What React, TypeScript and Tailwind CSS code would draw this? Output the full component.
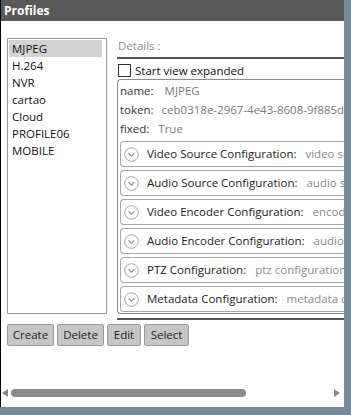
import React from 'react';

const profiles = ['MJPEG', 'H.264', 'NVR', 'cartao', 'Cloud', 'PROFILE06', 'MOBILE'];

const sections: [string, string][] = [
  ['Video Source Configuration:', 'video source configuration'],
  ['Audio Source Configuration:', 'audio source configuration'],
  ['Video Encoder Configuration:', 'encoder configuration'],
  ['Audio Encoder Configuration:', 'audio encoder configuration'],
  ['PTZ Configuration:', 'ptz configuration'],
  ['Metadata Configuration:', 'metadata configuration'],
];

const buttons: [string, string][] = [
  ['Create', 'w-[47px]'],
  ['Delete', 'w-[47px]'],
  ['Edit', 'w-[34px]'],
  ['Select', 'w-[45px]'],
];

function ExpandIcon() {
  return (
    <svg width="15" height="15" viewBox="0 0 15 15" className="shrink-0">
      <circle cx="7.5" cy="7.5" r="6.8" fill="white" stroke="#a3a3a3" strokeWidth="1" />
      <path d="M4.6 6.2 L7.5 9.1 L10.4 6.2" fill="none" stroke="#8a8a8a" strokeWidth="1.1" />
    </svg>
  );
}

export default function App() {
  return (
    <div
      className="flex h-[415px] w-[351px] bg-[#778899] text-[11.5px]"
      style={{ fontFamily: '"Open Sans", "Noto Sans", sans-serif' }}
    >
      <div className="flex h-[407px] w-[344px] flex-col overflow-hidden border-l border-black bg-white">
        {/* title bar */}
        <div className="flex h-[21px] shrink-0 items-center bg-[#595959] px-[3px] text-[12px] font-bold text-white">
          Profiles
        </div>

        <div className="flex flex-1 flex-col">
          <div className="flex pt-[17px] pl-[6px]">
            {/* profile list */}
            <div className="h-[276px] w-[100px] shrink-0 border border-[#9a9a9a] p-px">
              {profiles.map((p, i) => (
                <div
                  key={p}
                  className={`mr-[3px] flex h-[17px] items-center pl-[3px] leading-none text-[#111] ${
                    i === 0 ? 'bg-[#d3d3d3]' : ''
                  }`}
                >
                  {p}
                </div>
              ))}
            </div>

            {/* details */}
            <div className="ml-[10px] flex min-w-0 flex-1 flex-col">
              <div className="flex h-[16px] items-center pl-px text-[#8c8c8c]">Details :</div>
              <div className="mt-[3px] h-[2px] bg-[#555]" />
              <div className="mt-[4px] flex h-[15px] items-center pl-px">
                <div className="h-[13px] w-[13px] border border-[#333] bg-white" />
                <span className="ml-[4px] whitespace-nowrap text-[#111]">Start view expanded</span>
              </div>
              <div className="mt-px flex h-[235px] flex-col rounded-l-[4px] border border-r-0 border-[#8c8c8c] pt-px">
                <div className="flex h-[19px] items-center whitespace-nowrap pl-[2px]">
                  <span className="text-[#333]">name:</span>
                  <span className="ml-[11px] text-[#7a7a7a]">MJPEG</span>
                </div>
                <div className="flex h-[19px] items-center overflow-hidden whitespace-nowrap pl-[2px]">
                  <span className="text-[#333]">token:</span>
                  <span className="ml-[8px] text-[#7a7a7a]">ceb0318e-2967-4e43-8608-9f885d6c1a2b</span>
                </div>
                <div className="flex h-[19px] items-center whitespace-nowrap pl-[2px]">
                  <span className="text-[#333]">fixed:</span>
                  <span className="ml-[9px] text-[#7a7a7a]">True</span>
                </div>
                <div className="mt-[3px] ml-[2px] flex flex-col gap-[3px]">
                  {sections.map(([label, value]) => (
                    <div
                      key={label}
                      className="flex h-[26px] items-center overflow-hidden whitespace-nowrap rounded-l-[4px] border border-r-0 border-[#a8a8a8] pl-[3px]"
                    >
                      <ExpandIcon />
                      <span className="ml-[8px] text-[#222]">{label}</span>
                      <span className="ml-[9px] text-[#8a8a8a]">{value}</span>
                    </div>
                  ))}
                </div>
              </div>
              <div className="mt-[4px] h-[2px] bg-[#555]" />
            </div>
          </div>

          {/* buttons */}
          <div className="mt-[4px] flex gap-[3px] pl-[6px]">
            {buttons.map(([b, w]) => (
              <div
                key={b}
                className={`flex h-[22px] items-center justify-center rounded-[2px] border border-[#9a9a9a] bg-[#c6c6c6] text-[#222] ${w}`}
              >
                {b}
              </div>
            ))}
          </div>

          {/* horizontal scrollbar */}
          <div className="mt-[42px] flex h-[9px] items-center">
            <div className="ml-px h-0 w-0 border-y-[4px] border-r-[6px] border-y-transparent border-r-[#8a8a8a]" />
            <div className="ml-[3px] h-[8px] w-[235px] rounded-full bg-[#8a8a8a]" />
            <div className="ml-auto mr-[4px] h-0 w-0 border-y-[4px] border-l-[6px] border-y-transparent border-l-[#8a8a8a]" />
          </div>
        </div>
      </div>
    </div>
  );
}
